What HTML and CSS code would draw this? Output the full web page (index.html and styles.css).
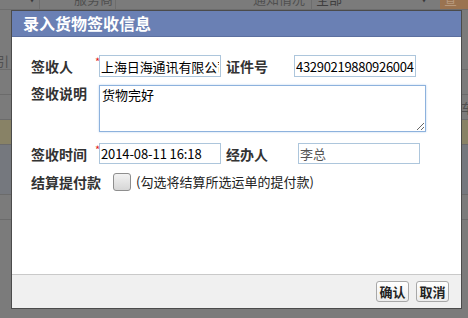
FILE: index.html
```html
<!DOCTYPE html>
<html lang="zh-CN">
<head>
    <meta charset="UTF-8">
    <title>录入货物签收信息</title>
    <link rel="stylesheet" href="styles.css">
</head>
<body>
    <div class="page">
        <div class="filter-bar">
            <span class="arrow arrow-left">▼</span>
            <span class="filter-label filter-provider">服务商</span>
            <span class="filter-label filter-notice">通知情况</span>
            <span class="filter-value">全部</span>
            <span class="arrow arrow-right">▼</span>
            <span class="query-btn">查询</span>
        </div>
        <div class="grid">
            <div class="grid-row row-gap"></div>
            <div class="grid-row"><span class="cell-left">引</span></div>
            <div class="grid-row"><span class="cell-right">车</span></div>
            <div class="grid-row row-yellow"></div>
            <div class="grid-row row-blue"></div>
            <div class="grid-row"></div>
        </div>
    </div>

    <div class="dialog">
        <div class="dialog-title">录入货物签收信息</div>
        <div class="dialog-body">
            <div class="form-row row-first">
                <label class="field-label">签收人</label>
                <span class="required">*</span>
                <input type="text" class="field field-short" value="上海日海通讯有限公司">
                <label class="field-label label-second">证件号</label>
                <input type="text" class="field field-short field-id" value="432902198809260047">
            </div>
            <div class="form-row row-note">
                <label class="field-label">签收说明</label>
                <span class="required"></span>
                <textarea class="field field-note">货物完好</textarea>
            </div>
            <div class="form-row row-time">
                <label class="field-label">签收时间</label>
                <span class="required">*</span>
                <input type="text" class="field field-short" value="2014-08-11 16:18">
                <label class="field-label label-second label-agent">经办人</label>
                <input type="text" class="field field-agent" value="李总" readonly>
            </div>
            <div class="form-row row-check">
                <label class="field-label label-wide">结算提付款</label>
                <input type="checkbox" class="check">
                <span class="check-hint">(勾选将结算所选运单的提付款)</span>
            </div>
        </div>
        <div class="dialog-footer">
            <button type="button" class="btn">确认</button>
            <button type="button" class="btn">取消</button>
        </div>
    </div>
</body>
</html>
```

FILE: styles.css
```css
* {
    box-sizing: border-box;
}

body {
    margin: 0;
    width: 468px;
    height: 318px;
    overflow: hidden;
    background: #7b7b7b;
    font-family: "Noto Sans CJK SC", sans-serif;
    font-size: 13px;
    color: #000;
}

/* page behind the mask */
.page {
    width: 468px;
}

.filter-bar {
    height: 10px;
    display: flex;
    overflow: hidden;
    color: #4f4f4f;
    font-size: 13px;
    line-height: 16px;
    border-bottom: 1px solid #6d6d6d;
}

.filter-bar span {
    margin-top: -9px;
}

.arrow {
    font-size: 8px;
    color: #3a3a3a;
}

.arrow-left {
    width: 40px;
    padding-left: 28px;
    border-right: 1px solid #6d6d6d;
}

.filter-provider {
    width: 76px;
    padding-left: 34px;
    border-right: 1px solid #6d6d6d;
}

.filter-notice {
    width: 196px;
    text-align: right;
    padding-right: 6px;
    border-right: 1px solid #6d6d6d;
    padding-left: 0;
}

.filter-value {
    width: 108px;
    padding-left: 4px;
    color: #3e3e3e;
}

.arrow-right {
    width: 16px;
}

.query-btn {
    flex: 1;
    margin-left: 4px;
    background: #9a7350;
    color: #b89a7e;
    padding-left: 4px;
}

.grid {
    display: flex;
    flex-direction: column;
}

.grid-row {
    height: 25px;
    border-bottom: 1px solid #6b6b6b;
    display: flex;
    justify-content: space-between;
    color: #505050;
    font-size: 13px;
    line-height: 25px;
}

.row-gap {
    height: 60px;
}

.cell-left {
    margin-left: -4px;
    margin-top: -22px;
}

.cell-right {
    margin-left: auto;
    margin-right: -6px;
}

.row-yellow {
    background: #888266;
}

.row-blue {
    background: #75787e;
    height: 50px;
}

/* dialog */
.dialog {
    position: absolute;
    left: 11px;
    top: 10px;
    width: 451px;
    height: 299px;
    border: 1px solid #4b4b4b;
    background: #fff;
    display: flex;
    flex-direction: column;
}

.dialog-title {
    height: 26px;
    background: #6a80b4;
    border-bottom: 1px solid #5b6f9f;
    color: #fff;
    font-size: 16px;
    font-weight: bold;
    line-height: 25px;
    padding-left: 11px;
}

.dialog-body {
    flex: 1;
    padding: 18px 0 0 19px;
}

.form-row {
    display: flex;
    align-items: center;
}

.field-label {
    width: 64px;
    font-size: 14px;
    font-weight: bold;
    color: #333;
    line-height: 16px;
}

.label-wide {
    width: 82px;
}

.required {
    width: 4px;
    align-self: flex-start;
    color: #e02020;
    font-size: 11px;
    line-height: 10px;
    margin-top: 1px;
}

.field {
    font-family: "Noto Sans CJK SC", sans-serif;
    font-size: 13px;
    color: #000;
    border: 1px solid #adc6dc;
    background: #fff;
    padding: 0 1px;
    margin: 0;
    outline: none;
}

.field-short {
    width: 122px;
    height: 22px;
    letter-spacing: -0.1px;
}

.field-id {
    letter-spacing: -0.3px;
}

.label-second {
    margin-left: 5px;
    width: 68px;
}

.label-agent {
    width: 72px;
}

.field-agent {
    width: 122px;
    height: 22px;
    color: #555;
}

.row-note {
    margin-top: 8px;
    align-items: flex-start;
}

.field-note {
    width: 327px;
    height: 47px;
    border-color: #8db2dd;
    box-shadow: 0 0 2px #bcd3ee;
    padding: 1px 2px;
    line-height: 16px;
    resize: both;
}

.row-time {
    margin-top: 11px;
}

.row-time .field-short {
    height: 21px;
}

.row-time .field-agent {
    height: 21px;
}

.row-check {
    margin-top: 9px;
}

.check {
    appearance: none;
    width: 18px;
    height: 18px;
    margin: 0 5px 0 0;
    border: 1px solid #8e8e8e;
    border-radius: 3px;
    background: linear-gradient(#f2f2f2, #d6d6d6);
}

.check-hint {
    color: #222;
    line-height: 18px;
}

.dialog-footer {
    height: 34px;
    background: #f0f0f0;
    border-top: 1px solid #c9c9c9;
    display: flex;
    justify-content: flex-end;
    align-items: center;
    gap: 7px;
    padding-right: 12px;
}

.btn {
    height: 21px;
    width: 33px;
    padding: 0;
    font-family: "Noto Sans CJK SC", sans-serif;
    font-size: 13px;
    font-weight: bold;
    color: #222;
    border: 1px solid #a8a8a8;
    border-radius: 3px;
    background: linear-gradient(#ffffff, #ececec);
    line-height: 18px;
}
```
